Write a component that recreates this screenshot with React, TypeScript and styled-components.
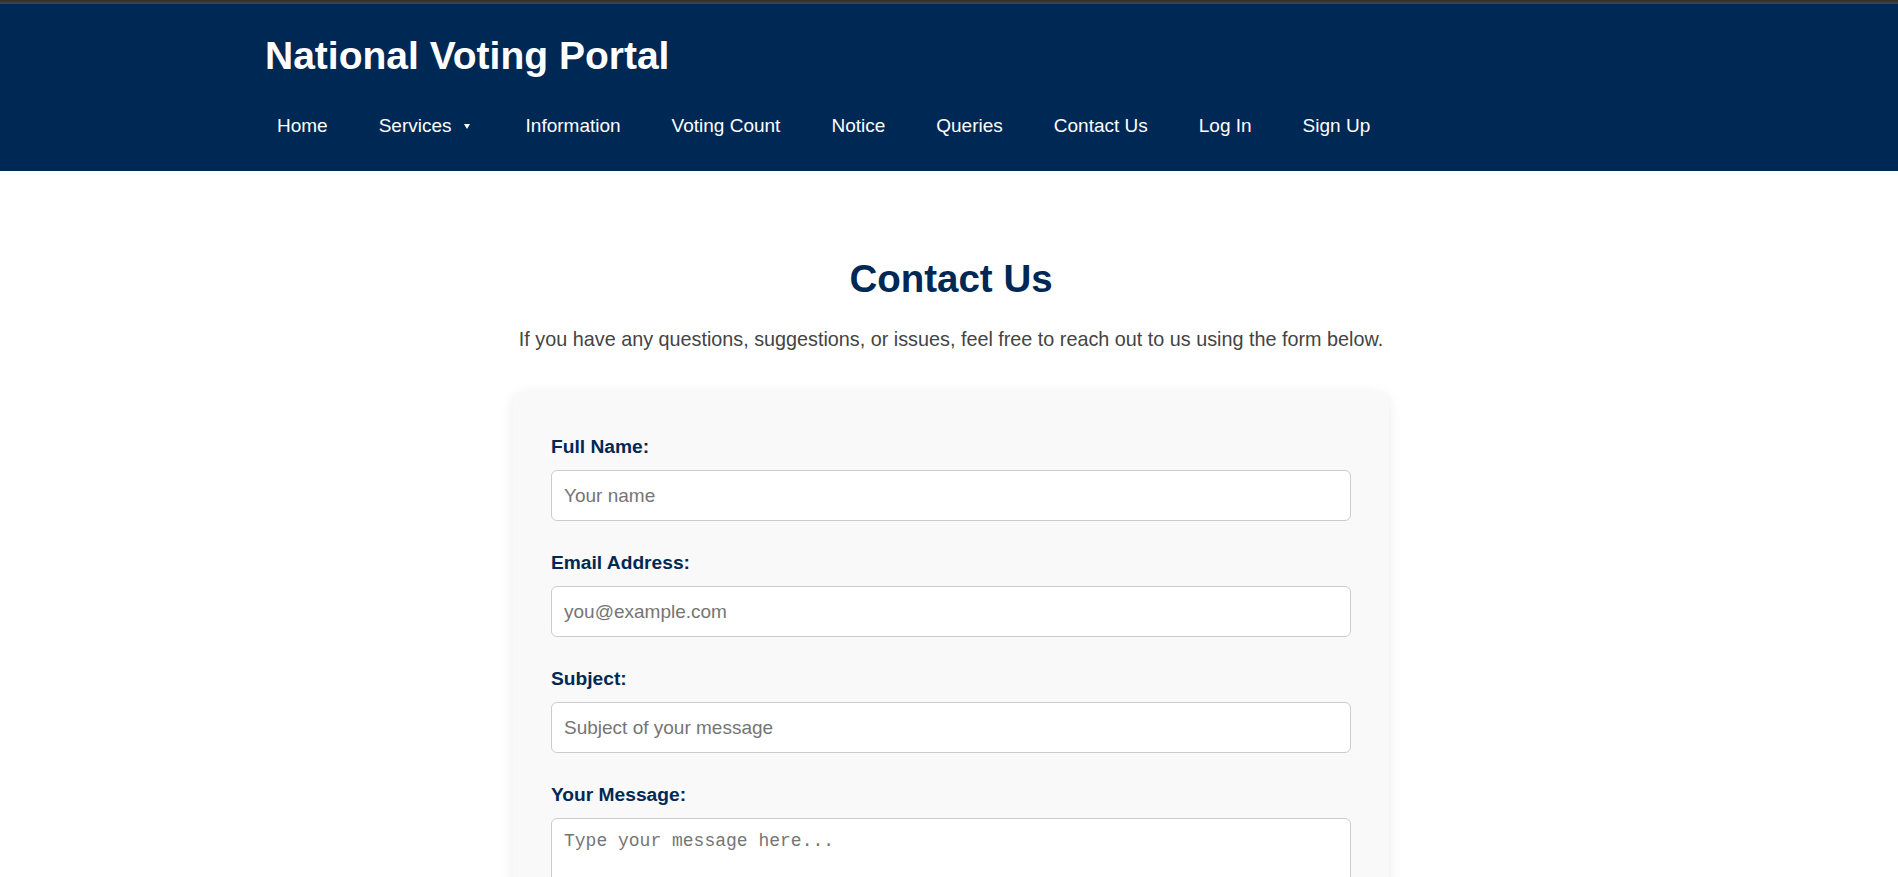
import React from "react";
import styled, { createGlobalStyle } from "styled-components";

const GlobalStyle = createGlobalStyle`
  html, body {
    margin: 0;
    padding: 0;
    background: #ffffff;
    font-family: "Liberation Sans", Arial, sans-serif;
  }
  * { box-sizing: border-box; }
`;

const TopStripe = styled.div`
  height: 4px;
  background: linear-gradient(#2e2e2e, #454545);
`;

const Header = styled.header`
  background: #002855;
  padding: 30px 0 24px;
`;

const HeaderInner = styled.div`
  max-width: 1400px;
  margin: 0 auto;
  padding: 0 16px;
`;

const SiteTitle = styled.h1`
  margin: 0;
  color: #ffffff;
  font-size: 39px;
  font-weight: 700;
  line-height: normal;
`;

const NavList = styled.ul`
  list-style: none;
  display: flex;
  align-items: center;
  gap: 27px;
  margin: 27px 0 0;
  padding: 0;
`;

const NavItem = styled.li`
  display: flex;
  align-items: center;
`;

const NavLink = styled.a`
  display: inline-flex;
  align-items: center;
  padding: 10px 12px;
  color: #ffffff;
  font-size: 19px;
  text-decoration: none;
  line-height: normal;
  cursor: pointer;
`;

const Caret = styled.span`
  display: inline-block;
  width: 0;
  height: 0;
  margin: 0 5px 0 12px;
  border-left: 3px solid transparent;
  border-right: 3px solid transparent;
  border-top: 5px solid #ffffff;
`;

const Main = styled.main`
  padding: 86px 14px 60px 18px;
  display: flex;
  flex-direction: column;
  align-items: center;
`;

const PageHeading = styled.h2`
  margin: 0;
  color: #002855;
  font-size: 38.5px;
  font-weight: 700;
  line-height: normal;
  text-align: center;
`;

const Intro = styled.p`
  margin: 27px 0 0;
  color: #444444;
  font-size: 19.8px;
  line-height: normal;
  text-align: center;
`;

const Card = styled.form`
  width: 876px;
  margin-top: 41px;
  padding: 44px 38px 40px;
  background: #f9f9f9;
  border-radius: 10px;
  box-shadow: 0 2px 14px rgba(0, 0, 0, 0.08);
`;

const Field = styled.div`
  margin-bottom: 31px;
`;

const Label = styled.label`
  display: block;
  margin-bottom: 12px;
  color: #002855;
  font-size: 19.2px;
  font-weight: 700;
  line-height: 22px;
`;

const TextInput = styled.input`
  display: block;
  width: 100%;
  height: 51px;
  padding: 0 12px;
  border: 1px solid #cccccc;
  border-radius: 6px;
  background: #ffffff;
  font-family: "Liberation Sans", Arial, sans-serif;
  font-size: 19px;
  color: #222;
  outline: none;
  &::placeholder {
    color: #757575;
  }
`;

const MessageArea = styled.textarea`
  display: block;
  width: 100%;
  height: 160px;
  padding: 12px;
  border: 1px solid #cccccc;
  border-radius: 6px;
  background: #ffffff;
  font-family: "Liberation Mono", "DejaVu Sans Mono", monospace;
  font-size: 18px;
  color: #222;
  resize: vertical;
  outline: none;
  &::placeholder {
    color: #757575;
  }
`;

const SubmitButton = styled.button`
  display: block;
  width: 100%;
  padding: 14px;
  border: none;
  border-radius: 6px;
  background: #002855;
  color: #ffffff;
  font-family: "Liberation Sans", Arial, sans-serif;
  font-size: 19px;
  font-weight: 700;
  cursor: pointer;
`;

const navItems = [
  "Home",
  "Services",
  "Information",
  "Voting Count",
  "Notice",
  "Queries",
  "Contact Us",
  "Log In",
  "Sign Up",
];

export default function App() {
  return (
    <>
      <GlobalStyle />
      <TopStripe />
      <Header>
        <HeaderInner>
          <SiteTitle>National Voting Portal</SiteTitle>
          <nav>
            <NavList>
              {navItems.map((item) => (
                <NavItem key={item}>
                  <NavLink>
                    {item}
                    {item === "Services" && <Caret />}
                  </NavLink>
                </NavItem>
              ))}
            </NavList>
          </nav>
        </HeaderInner>
      </Header>
      <Main>
        <PageHeading>Contact Us</PageHeading>
        <Intro>
          If you have any questions, suggestions, or issues, feel free to reach
          out to us using the form below.
        </Intro>
        <Card onSubmit={(e) => e.preventDefault()}>
          <Field>
            <Label htmlFor="name">Full Name:</Label>
            <TextInput id="name" type="text" placeholder="Your name" />
          </Field>
          <Field>
            <Label htmlFor="email">Email Address:</Label>
            <TextInput id="email" type="email" placeholder="you@example.com" />
          </Field>
          <Field>
            <Label htmlFor="subject">Subject:</Label>
            <TextInput
              id="subject"
              type="text"
              placeholder="Subject of your message"
            />
          </Field>
          <Field>
            <Label htmlFor="message">Your Message:</Label>
            <MessageArea id="message" placeholder="Type your message here..." />
          </Field>
          <SubmitButton type="submit">Send Message</SubmitButton>
        </Card>
      </Main>
    </>
  );
}
